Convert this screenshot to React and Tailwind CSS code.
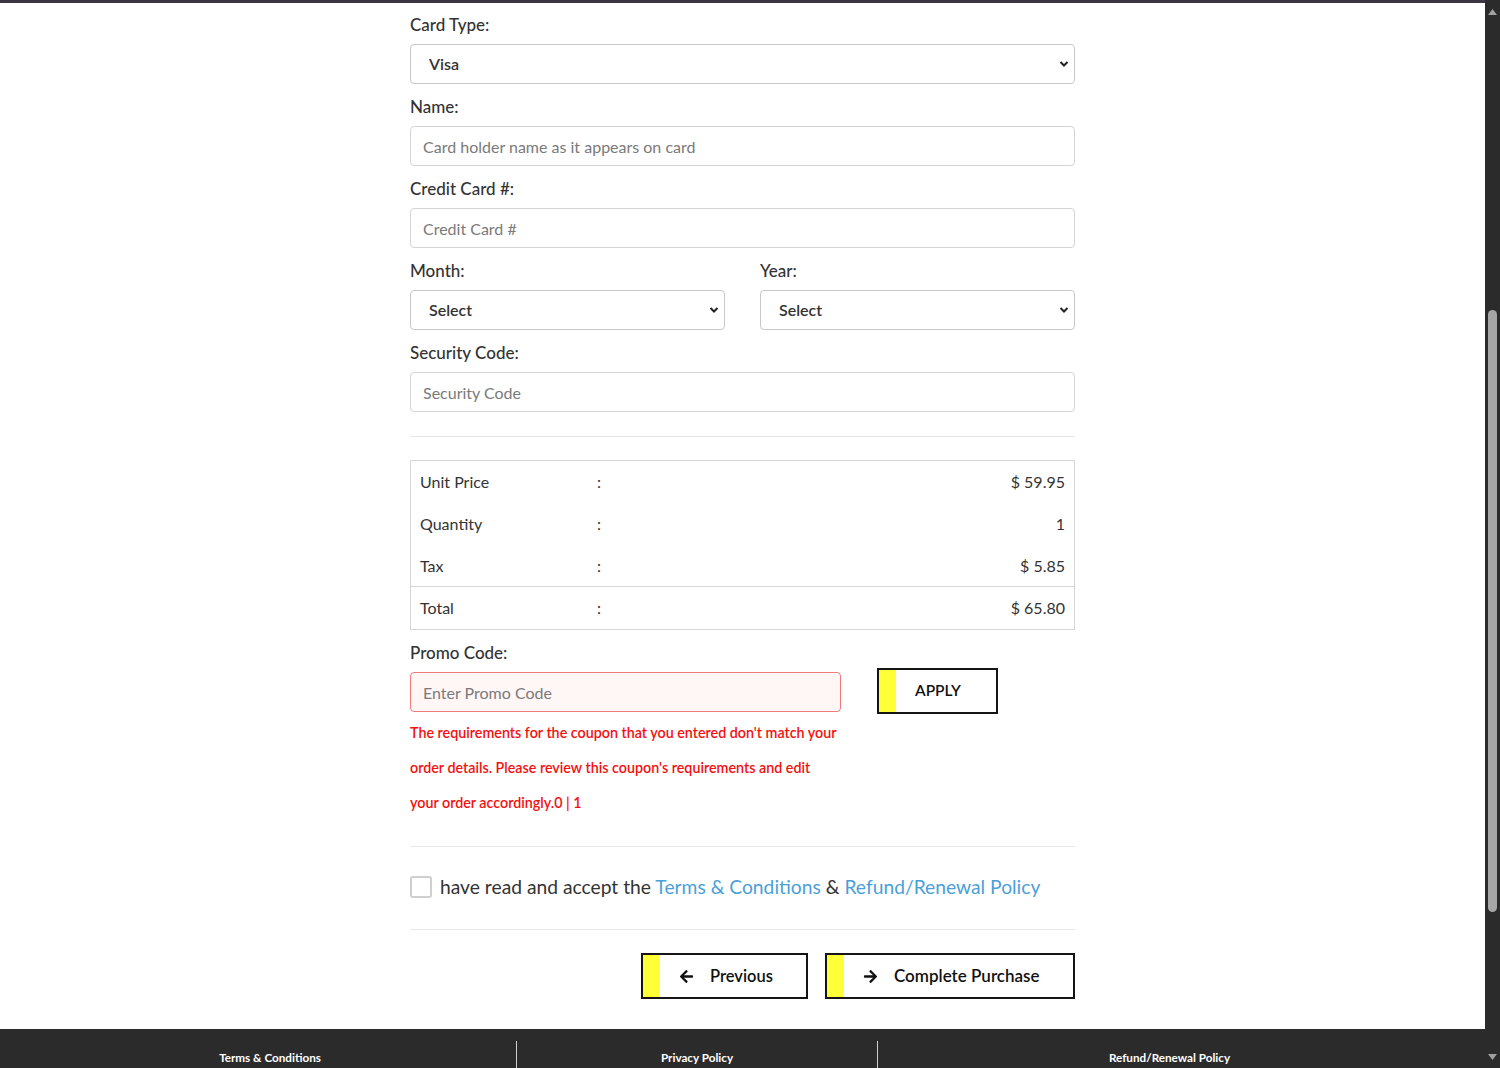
import React from "react";
import { FaArrowLeft, FaArrowRight } from "react-icons/fa";

const Chevron = () => (
  <svg
    className="pointer-events-none absolute right-[6px] top-1/2 -translate-y-1/2"
    width="10"
    height="7"
    viewBox="0 0 10 7"
  >
    <path d="M1.5 1.5 L5 5 L8.5 1.5" fill="none" stroke="#222" strokeWidth="2" />
  </svg>
);

const Label = ({ children }) => (
  <label className="mb-[9px] block h-5 text-[17px] leading-5 font-medium text-[#333]">
    {children}
  </label>
);

const TextField = ({ label, placeholder }) => (
  <div className="mb-[13px]">
    <Label>{label}</Label>
    <input
      placeholder={placeholder}
      className="block h-10 w-full rounded-[4px] border border-[#d4d4d4] px-3 text-[16px] text-[#333] placeholder:text-[#7a7a7a] outline-none"
    />
  </div>
);

const SelectField = ({ label, value, className = "" }) => (
  <div className={"mb-[13px] " + className}>
    <Label>{label}</Label>
    <div className="relative">
      <select
        defaultValue={value}
        className="block h-10 w-full appearance-none rounded-[4px] border border-[#c8c8c8] bg-white pl-[18px] text-base font-semibold text-[#333] outline-none"
      >
        <option>{value}</option>
      </select>
      <Chevron />
    </div>
  </div>
);

const SUMMARY = [
  { label: "Unit Price", value: "$ 59.95", h: "h-[42px]" },
  { label: "Quantity", value: "1", h: "h-[42px]" },
  { label: "Tax", value: "$ 5.85", h: "h-[41px]" },
];

const YellowButton = ({ icon, children, className = "" }) => (
  <button
    className={
      "flex h-[46px] items-stretch border-2 border-[#151515] bg-white font-semibold text-[#111] " +
      className
    }
  >
    <span className="w-[17px] bg-[#ffff38]" />
    <span className="flex flex-1 items-center gap-[16px] pl-[19px]">
      {icon}
      {children}
    </span>
  </button>
);

const Scrollbar = () => (
  <div className="relative flex w-[15px] flex-col items-center bg-[#2b2b2b]">
    <svg className="mt-[9px]" width="9" height="6" viewBox="0 0 9 6">
      <path d="M0 6 L4.5 0 L9 6 Z" fill="#a0a0a0" />
    </svg>
    <div className="mt-[295px] h-[602px] w-[9px] rounded-full bg-[#a6a6a6]" />
    <svg className="mt-auto mb-[8px]" width="9" height="6" viewBox="0 0 9 6">
      <path d="M0 0 L9 0 L4.5 6 Z" fill="#a0a0a0" />
    </svg>
  </div>
);

export default function App() {
  return (
    <div className="flex h-[1068px] w-full overflow-hidden bg-white font-['Lato',sans-serif]">
      <div className="flex flex-1 flex-col">
        <div className="h-[3px] bg-[#3b3642]" />
        <main className="flex flex-1 justify-center">
          <form className="w-[665px] pt-[12px]">
            <SelectField label="Card Type:" value="Visa" />
            <TextField label="Name:" placeholder="Card holder name as it appears on card" />
            <TextField label="Credit Card #:" placeholder="Credit Card #" />
            <div className="flex gap-[35px]">
              <SelectField label="Month:" value="Select" className="flex-1" />
              <SelectField label="Year:" value="Select" className="flex-1" />
            </div>
            <TextField label="Security Code:" placeholder="Security Code" />

            <div className="mt-[24px] h-px bg-[#e8e8e8]" />

            <div className="mt-[23px] border border-[#d6d6d6] text-base text-[#333]">
              {SUMMARY.map((row) => (
                <div key={row.label} className={"flex items-center px-[9px] " + row.h}>
                  <span className="w-[177px]">{row.label}</span>
                  <span>:</span>
                  <span className="ml-auto">{row.value}</span>
                </div>
              ))}
              <div className="flex h-[43px] items-center border-t border-[#d6d6d6] px-[9px]">
                <span className="w-[177px]">Total</span>
                <span>:</span>
                <span className="ml-auto">$ 65.80</span>
              </div>
            </div>

            <div className="mt-[13px]">
              <Label>Promo Code:</Label>
            </div>
            <div className="mt-[-4px] flex items-start">
              <div className="w-[431px]">
                <input
                  placeholder="Enter Promo Code"
                  className="mt-[4px] block h-10 w-full rounded-[4px] border border-[#f07a7a] bg-[#fff6f6] px-3 text-[16px] placeholder:text-[#7a7a7a] outline-none"
                />
                <p className="mt-[3px] whitespace-nowrap text-[14.3px] leading-[35px] font-semibold text-[#f50f0f]">
                  The requirements for the coupon that you entered don't match your
                  <br />
                  order details. Please review this coupon's requirements and edit
                  <br />
                  your order accordingly.0 | 1
                </p>
              </div>
              <YellowButton className="ml-[36px] w-[121px] text-[15.5px]">APPLY</YellowButton>
            </div>

            <div className="mt-[26px] h-px bg-[#e8e8e8]" />

            <div className="mt-[19px] flex h-[42px] items-center gap-[8px] text-[19.25px] text-[#333]">
              <span className="h-[22px] w-[22px] rounded-[3px] border-2 border-[#cfcfcf] bg-white" />
              <span>
                have read and accept the{" "}
                <a className="text-[#4b9fd9]">Terms &amp; Conditions</a> &amp;{" "}
                <a className="text-[#4b9fd9]">Refund/Renewal Policy</a>
              </span>
            </div>

            <div className="mt-[21px] h-px bg-[#e8e8e8]" />

            <div className="mt-[23px] flex justify-end gap-[17px]">
              <YellowButton
                className="w-[167px] text-[16.5px]"
                icon={<FaArrowLeft className="text-[15px]" />}
              >
                Previous
              </YellowButton>
              <YellowButton
                className="w-[250px] text-[17px]"
                icon={<FaArrowRight className="text-[15px]" />}
              >
                Complete Purchase
              </YellowButton>
            </div>
          </form>
        </main>
        <footer className="flex h-[39px] bg-[#2b2b2b] text-[11.7px] font-bold text-white">
          <div className="flex w-[516px] items-end justify-center pb-[1px] pl-[24px]">
            Terms &amp; Conditions
          </div>
          <div className="mt-[12px] w-px bg-[#d0d0d0]" />
          <div className="flex w-[360px] items-end justify-center pb-[1px]">
            Privacy Policy
          </div>
          <div className="mt-[12px] w-px bg-[#d0d0d0]" />
          <div className="flex flex-1 items-end justify-center pb-[1px] pr-[24px]">
            Refund/Renewal Policy
          </div>
        </footer>
      </div>
      <Scrollbar />
    </div>
  );
}
